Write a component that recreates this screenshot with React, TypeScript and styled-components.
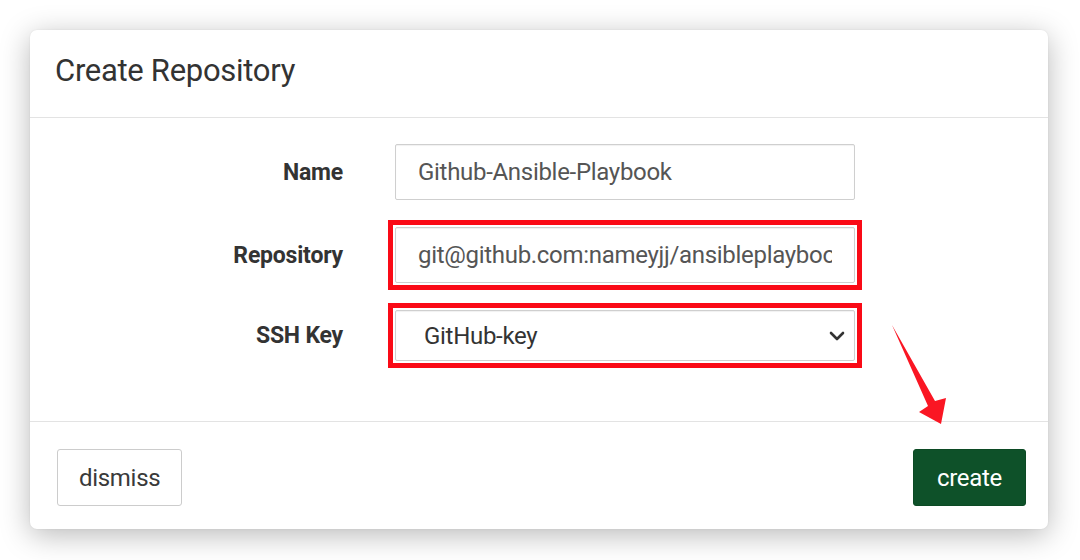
import React from "react";
import styled, { createGlobalStyle } from "styled-components";

const Global = createGlobalStyle`
  html, body { margin: 0; padding: 0; background: #ffffff; }
  body { font-family: Roboto, "Liberation Sans", Arial, sans-serif; }
  * { box-sizing: border-box; }
`;

const Page = styled.div`
  position: relative;
  width: 1080px;
  height: 560px;
  padding: 30px 32px 0 30px;
  overflow: hidden;
`;

const Modal = styled.div`
  width: 1018px;
  background: #fff;
  border-radius: 7px;
  box-shadow: 0 6px 30px rgba(0, 0, 0, 0.28), 0 0 2px rgba(0, 0, 0, 0.08);
  display: flex;
  flex-direction: column;
`;

const Header = styled.div`
  padding: 23px 25px 28px;
  border-bottom: 1px solid #e3e3e3;
`;

const Title = styled.h4`
  margin: 0;
  font-size: 31px;
  line-height: 36px;
  font-weight: 400;
  letter-spacing: -0.3px;
  color: #333;
`;

const Body = styled.div`
  padding: 19px 0 53px;
  display: grid;
  grid-template-columns: 313px 474px;
  column-gap: 45px;
  row-gap: 13px;
  align-items: center;
`;

const Label = styled.label`
  text-align: right;
  font-size: 23px;
  font-weight: 700;
  color: #333;
  letter-spacing: -0.2px;
`;

const Field = styled.div<{ $highlight?: boolean }>`
  border: 5px solid ${(p) => (p.$highlight ? "#fa0a16" : "transparent")};
  padding: 2px;
`;

const TextInput = styled.input`
  display: block;
  width: 100%;
  height: 56px;
  padding: 0 22px;
  border: 1px solid #cfcfcf;
  border-radius: 2px;
  font-family: Roboto, "Liberation Sans", Arial, sans-serif;
  font-size: 24px;
  letter-spacing: -0.3px;
  color: #555;
  background: #fff;
  box-shadow: inset 0 1px 1px rgba(0, 0, 0, 0.06);
  outline: none;
`;

const SelectBox = styled.div`
  display: flex;
  align-items: center;
  height: 51px;
  border: 1px solid #cfcfcf;
  border-radius: 2px;
  padding: 0 9px 0 0;
  background: #fff;
  box-shadow: inset 0 1px 1px rgba(0, 0, 0, 0.06);
`;

const NativeSelect = styled.select`
  flex: 1;
  height: 100%;
  appearance: none;
  -webkit-appearance: none;
  border: none;
  background: transparent;
  padding: 0 0 0 28px;
  font-family: Roboto, "Liberation Sans", Arial, sans-serif;
  font-size: 24px;
  letter-spacing: -0.3px;
  color: #333;
  outline: none;
`;

const Footer = styled.div`
  border-top: 1px solid #e3e3e3;
  padding: 27px 22px 23px 27px;
  display: flex;
  justify-content: space-between;
  align-items: center;
`;

const Button = styled.button<{ $primary?: boolean }>`
  height: 57px;
  padding: 0 ${(p) => (p.$primary ? "23px" : "21px")};
  border-radius: 3px;
  border: 1px solid ${(p) => (p.$primary ? "#0c4a24" : "#cccccc")};
  background: ${(p) => (p.$primary ? "#0e5129" : "#ffffff")};
  color: ${(p) => (p.$primary ? "#ffffff" : "#3a3a3a")};
  font-family: Roboto, "Liberation Sans", Arial, sans-serif;
  font-size: 24px;
  letter-spacing: -0.3px;
  cursor: pointer;
`;

const Annotation = styled.svg`
  position: absolute;
  left: 0;
  top: 0;
  pointer-events: none;
`;

const Chevron = () => (
  <svg width="16" height="10" viewBox="0 0 16 10">
    <path d="M2 2 L8 8 L14 2" fill="none" stroke="#333" strokeWidth="2.6" strokeLinecap="round" strokeLinejoin="round" />
  </svg>
);

export default function App() {
  return (
    <>
      <Global />
      <Page>
        <Modal>
          <Header>
            <Title>Create Repository</Title>
          </Header>
          <Body>
            <Label>Name</Label>
            <Field>
              <TextInput defaultValue="Github-Ansible-Playbook" />
            </Field>
            <Label>Repository</Label>
            <Field $highlight>
              <TextInput defaultValue="git@github.com:nameyjj/ansibleplaybook.git" />
            </Field>
            <Label>SSH Key</Label>
            <Field $highlight>
              <SelectBox>
                <NativeSelect defaultValue="github">
                  <option value="github">GitHub-key</option>
                </NativeSelect>
                <Chevron />
              </SelectBox>
            </Field>
          </Body>
          <Footer>
            <Button>dismiss</Button>
            <Button $primary>create</Button>
          </Footer>
        </Modal>
        <Annotation width="1080" height="560" viewBox="0 0 1080 560">
          <polygon
            points="892,325 935,401 946,398 941,424 919,412 928,406"
            fill="#fa1623"
          />
        </Annotation>
      </Page>
    </>
  );
}
